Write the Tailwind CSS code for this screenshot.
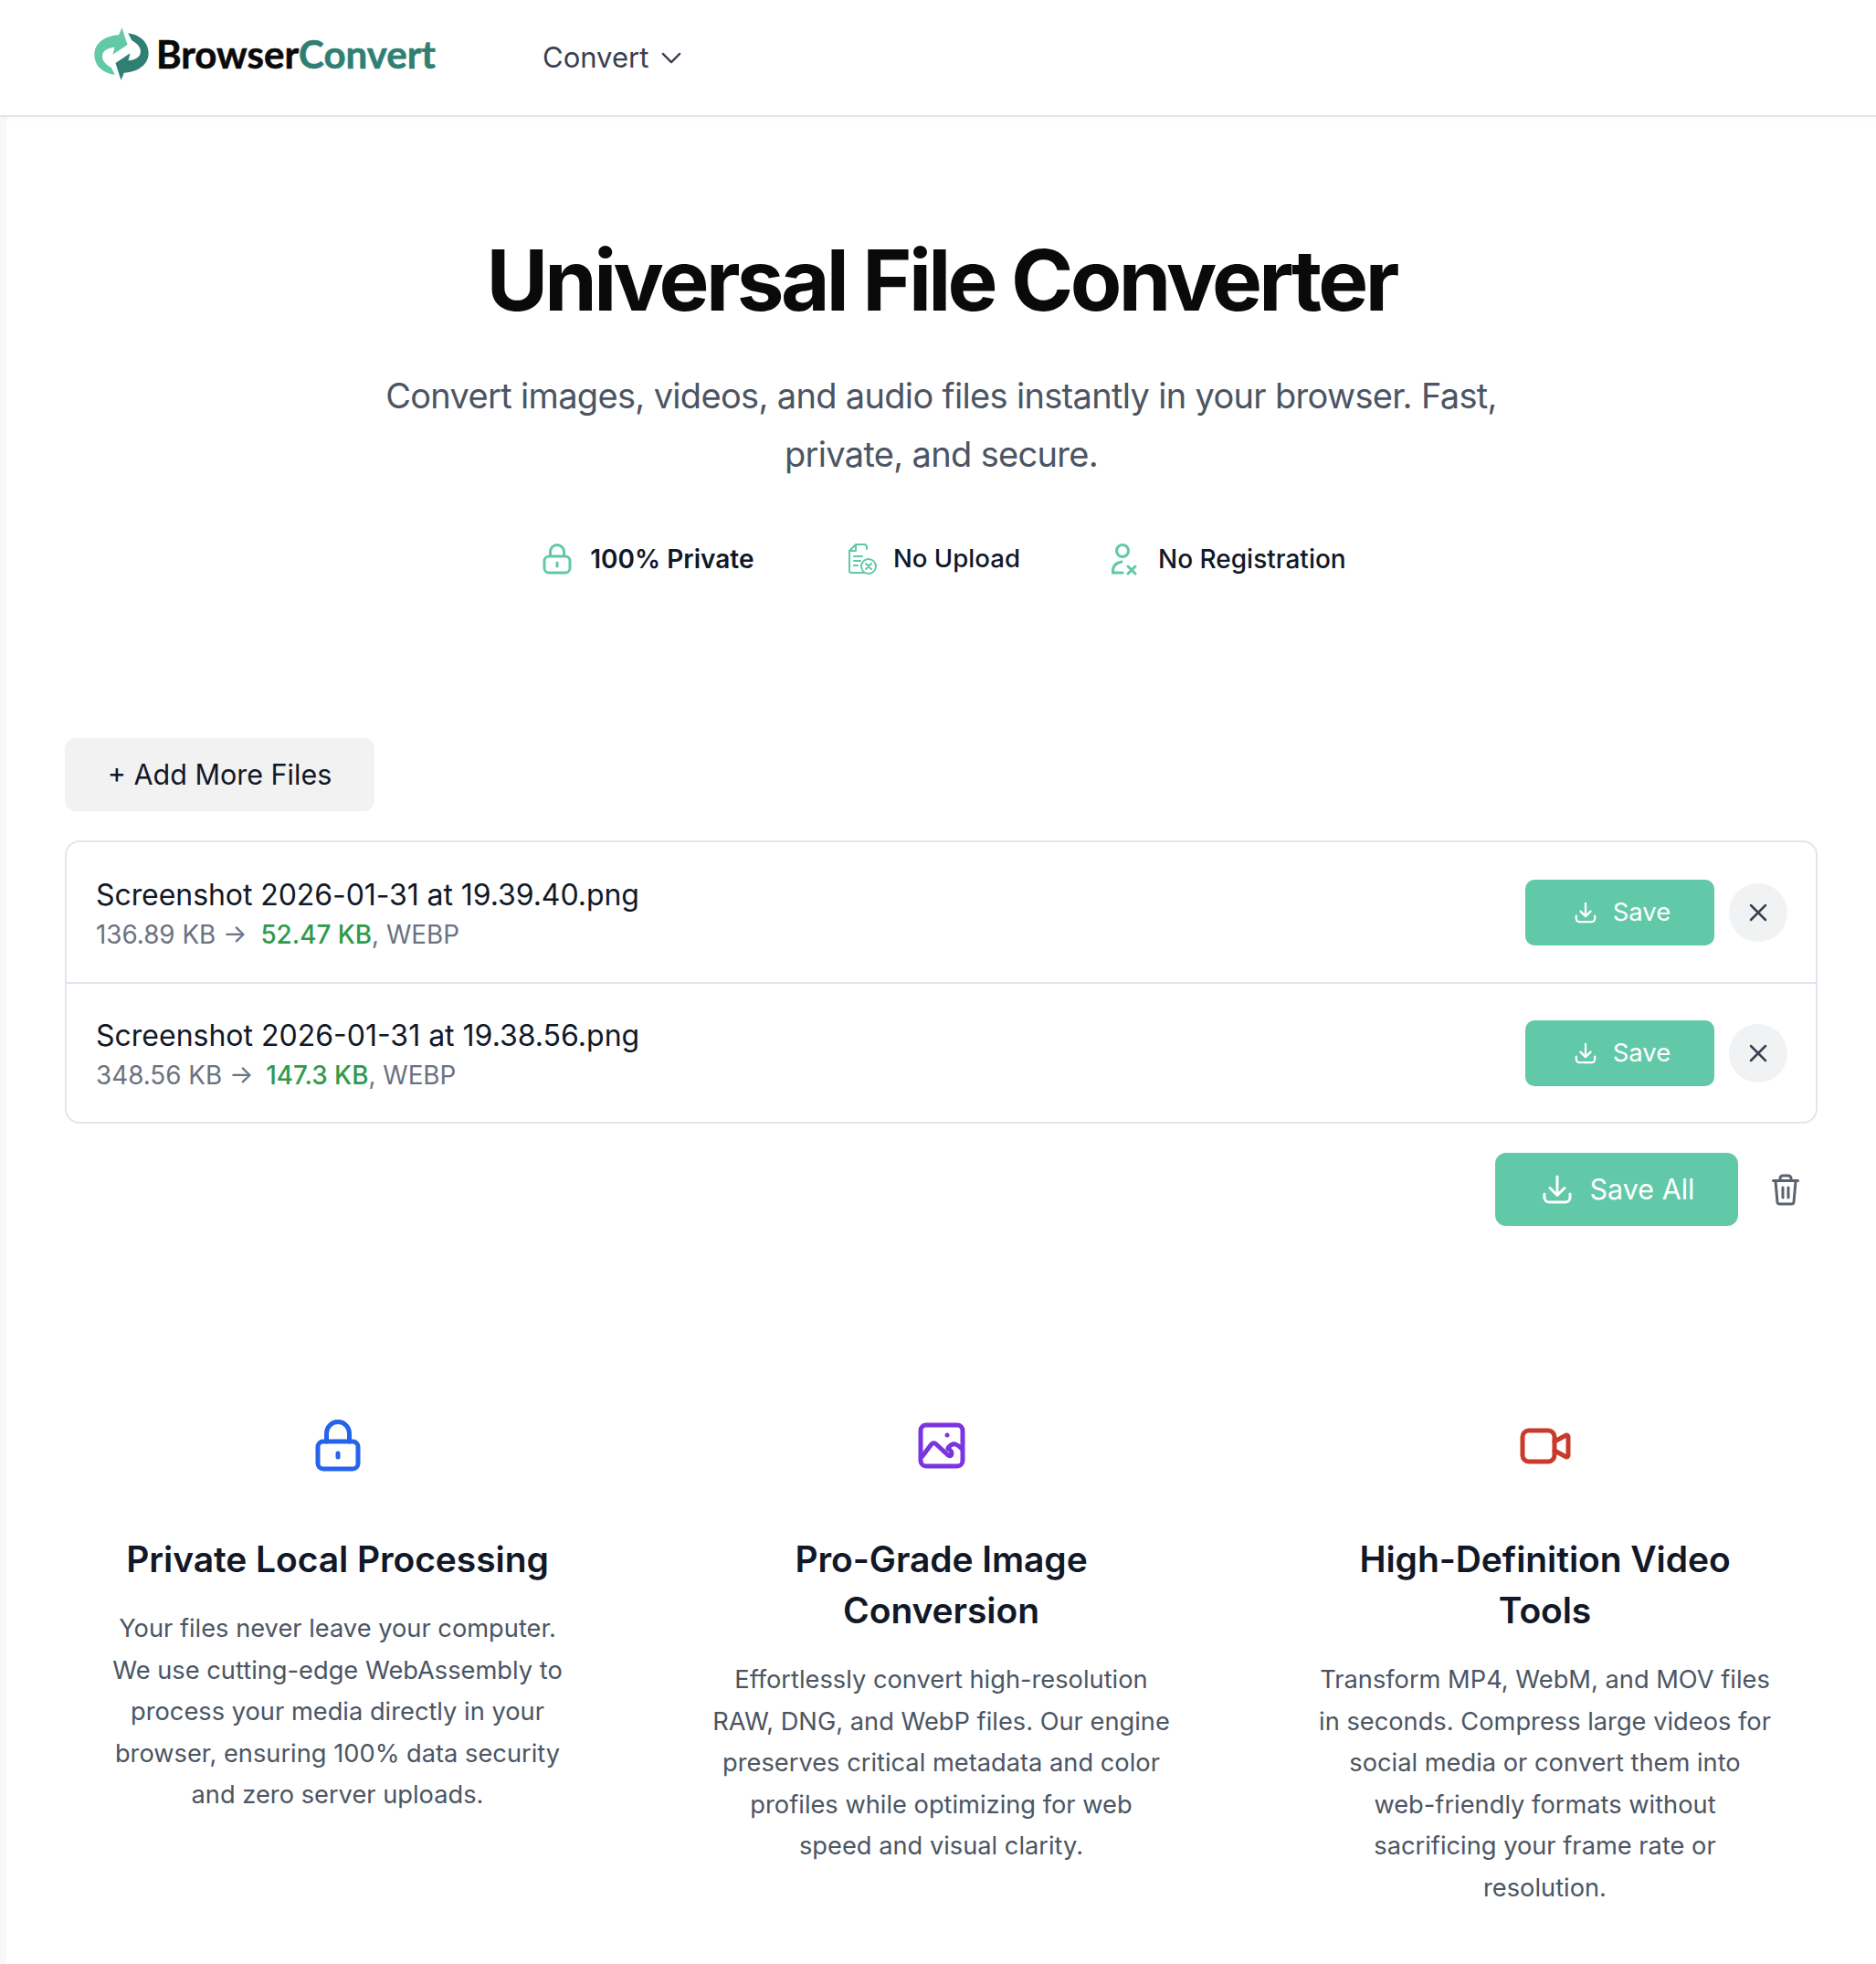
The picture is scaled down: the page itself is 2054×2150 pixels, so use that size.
<!DOCTYPE html>
<html lang="en">
<head>
    <meta charset="UTF-8">
    <title>BrowserConvert - Universal File Converter</title>
    <script src="https://cdn.jsdelivr.net/npm/@tailwindcss/browser@4"></script>
</head>
<body class="bg-white font-['Inter',sans-serif] text-[#111827] min-h-screen overflow-hidden">

    <!-- Header -->
    <header class="relative z-10 h-[128px] border-b-2 border-[#e2e5ee] bg-white shadow-[0_2px_6px_rgba(0,0,0,0.03)] flex items-center">
        <a href="#" class="flex items-center ml-[100px] w-[478px] -mt-[8px]">
            <svg class="w-[67px] h-[64px] shrink-0" viewBox="30 25 200 190">
                <path fill="#61c9a8" d="M130 34 L148 90 L100 122 L106 98 C85 100 66 108 66 128 C66 148 85 158 95 165 L107 188 C70 183 40 160 40 122 C40 85 75 60 120 58 Z"/>
                <path fill="#2f7f73" transform="rotate(180 128.5 120)" d="M130 34 L148 90 L100 122 L106 98 C85 100 66 108 66 128 C66 148 85 158 95 165 L107 188 C70 183 40 160 40 122 C40 85 75 60 120 58 Z"/>
            </svg>
            <span class="font-['Lato',sans-serif] font-bold [-webkit-text-stroke:0.6px] text-[42px] leading-none ml-[4px] text-[#0a0a0a]">Browser<span class="text-[#2f7f73]">Convert</span></span>
        </a>
        <button class="flex items-center gap-[14px] ml-[16px] text-[31px] text-[#374151]">
            Convert
            <svg class="w-[22px] h-[13px]" viewBox="0 0 24 14" fill="none" stroke="#374151" stroke-width="2.5" stroke-linecap="round" stroke-linejoin="round"><path d="M2 2l10 10L22 2"/></svg>
        </button>
    </header>

    <div class="flex min-h-[2022px]">
        <div class="w-[7px] shrink-0 bg-[#f9f9f9]"></div>

        <main class="flex-1 min-w-0 px-[64px]">
            <!-- Hero -->
            <section class="text-center pt-[125px]">
                <h1 class="text-[92.4px] leading-[106px] font-bold tracking-[-0.04em] text-[#0a0a0a]">Universal File Converter</h1>
                <p class="mt-[42px] mx-auto max-w-[1300px] text-[38px] tracking-[-0.67px] leading-[64px] text-[#4b5563]">Convert images, videos, and audio files instantly in your browser. Fast, private, and secure.</p>
                <div class="mt-[62px] pl-[7px] flex justify-center items-center gap-[100px] text-[28px] font-medium text-[#111827]">
                    <div class="flex items-center gap-[20px]">
                        <svg class="w-[32px] h-[36px]" viewBox="0 0 32 36" fill="none" stroke="#61c9a8" stroke-width="3"><rect x="2" y="15" width="28" height="18" rx="5"/><path d="M8.5 15V10a7.5 7.5 0 0115 0v5"/><path d="M16 22v4" stroke-linecap="round"/></svg>
                        <span class="font-semibold">100% Private</span>
                    </div>
                    <div class="flex items-center gap-[17.5px] ml-[3px]">
                        <svg class="w-[32px] h-[36px]" viewBox="0 0 32 36" fill="none" stroke="#61c9a8" stroke-width="2" stroke-linecap="round" stroke-linejoin="round"><path d="M21 7V5a3 3 0 00-3-3H9L2 9v22a2 2 0 002 2h14"/><path d="M9 2v7H2"/><path d="M7 15h9M7 20h7M7 25h4"/><circle cx="23" cy="26" r="8"/><path d="M20 23l6 6M26 23l-6 6"/></svg>
                        <span class="text-[27.6px]">No Upload</span>
                    </div>
                    <div class="flex items-center gap-[21px] -ml-[2px]">
                        <svg class="w-[32px] h-[36px]" viewBox="0 0 32 36" fill="none" stroke="#61c9a8" stroke-width="3" stroke-linecap="round"><circle cx="14" cy="9" r="6.5"/><path d="M14 33H3.5C3 26 7 22 13 21"/><path d="M20 26l8 8M28 26l-8 8"/></svg>
                        <span>No Registration</span>
                    </div>
                </div>
            </section>

            <!-- Files -->
            <section class="mt-[175px]">
                <button class="h-[80px] w-[339px] rounded-[12px] bg-[#f2f2f2] text-[30.5px] text-[#111827]">+ Add More Files</button>

                <div class="mt-[32px] border-2 border-[#e2e5ee] rounded-[16px]">
                    <div class="h-[155px] flex items-center justify-between pl-[32px] pr-[31px] border-b-2 border-[#e2e5ee]">
                        <div class="pt-[4px]">
                            <p class="text-[32px] leading-[44px] tracking-[-0.07px] text-[#111827]">Screenshot 2026-01-31 at 19.39.40.png</p>
                            <p class="text-[27.8px] leading-[42px] text-[#6b7280]">136.89 KB → <span class="ml-[7px] text-[#2f9a4b] font-medium">52.47 KB</span>, WEBP</p>
                        </div>
                        <div class="flex items-center gap-[16px]">
                            <button class="h-[72px] w-[207px] pl-[6px] rounded-[10px] bg-[#61c9a8] text-white text-[27.5px] flex items-center justify-center gap-[18px]">
                                <svg class="w-[24px] h-[24px]" viewBox="0 0 26 26" fill="none" stroke="currentColor" stroke-width="2.5" stroke-linecap="round" stroke-linejoin="round"><path d="M13 2v15M7 11.5l6 6 6-6"/><path d="M2 17v3a4 4 0 004 4h14a4 4 0 004-4v-3"/></svg>
                                Save
                            </button>
                            <button class="w-[64px] h-[64px] rounded-full bg-[#f1f2f4] flex items-center justify-center">
                                <svg class="w-[20px] h-[20px]" viewBox="0 0 20 20" fill="none" stroke="#374151" stroke-width="2.5" stroke-linecap="round"><path d="M2 2l16 16M18 2L2 18"/></svg>
                            </button>
                        </div>
                    </div>
                    <div class="h-[151px] flex items-center justify-between pl-[32px] pr-[31px]">
                        <div class="pt-[4px]">
                            <p class="text-[32px] leading-[44px] text-[#111827]">Screenshot 2026-01-31 at 19.38.56.png</p>
                            <p class="text-[27.8px] leading-[42px] text-[#6b7280]">348.56 KB → <span class="ml-[6px] text-[#2f9a4b] font-medium">147.3 KB</span>, WEBP</p>
                        </div>
                        <div class="flex items-center gap-[16px]">
                            <button class="h-[72px] w-[207px] pl-[6px] rounded-[10px] bg-[#61c9a8] text-white text-[27.5px] flex items-center justify-center gap-[18px]">
                                <svg class="w-[24px] h-[24px]" viewBox="0 0 26 26" fill="none" stroke="currentColor" stroke-width="2.5" stroke-linecap="round" stroke-linejoin="round"><path d="M13 2v15M7 11.5l6 6 6-6"/><path d="M2 17v3a4 4 0 004 4h14a4 4 0 004-4v-3"/></svg>
                                Save
                            </button>
                            <button class="w-[64px] h-[64px] rounded-full bg-[#f1f2f4] flex items-center justify-center">
                                <svg class="w-[20px] h-[20px]" viewBox="0 0 20 20" fill="none" stroke="#374151" stroke-width="2.5" stroke-linecap="round"><path d="M2 2l16 16M18 2L2 18"/></svg>
                            </button>
                        </div>
                    </div>
                </div>

                <div class="mt-[32px] flex items-center justify-end gap-[37px] pr-[20px]">
                    <button class="h-[80px] w-[266px] pl-[4px] rounded-[12px] bg-[#61c9a8] text-white text-[30.5px] flex items-center justify-center gap-[20px]">
                        <svg class="w-[32px] h-[32px]" viewBox="0 0 32 32" fill="none" stroke="currentColor" stroke-width="3" stroke-linecap="round" stroke-linejoin="round"><path d="M16 2v20M8 14.5l8 8 8-8"/><path d="M2 21v4a5 5 0 005 5h18a5 5 0 005-5v-4"/></svg>
                        Save All
                    </button>
                    <svg class="w-[30px] h-[35px]" viewBox="0 0 30 35" fill="none" stroke="#5b6270" stroke-width="3" stroke-linecap="round" stroke-linejoin="round"><path d="M1.5 7.5h27"/><path d="M9 7V5a3 3 0 013-3h6a3 3 0 013 3v2"/><path d="M4 8l2 23a2.5 2.5 0 002.5 2h13a2.5 2.5 0 002.5-2l2-23"/><path d="M12 15v11M18 15v11"/></svg>
                </div>
            </section>

            <!-- Features -->
            <section class="mt-[212px] grid grid-cols-3 gap-[64px] text-center">
                <div class="px-[48px]">
                    <svg class="mx-auto w-[52px] h-[58px]" viewBox="0 0 52 58" fill="none" stroke="#2563eb" stroke-width="5" stroke-linecap="round"><rect x="4" y="24" width="44" height="30" rx="6"/><path d="M13.5 24V15a12.5 12.5 0 0125 0v9"/><path d="M26 37v4"/></svg>
                    <h3 class="mt-[67px] text-[39px] leading-[56px] font-semibold tracking-[-0.002em] text-[#111827]">Private Local Processing</h3>
                    <p class="mt-[25px] text-[27.25px] leading-[45.5px] text-[#4b5563]">Your files never leave your computer. We use cutting-edge WebAssembly to process your media directly in your browser, ensuring 100% data security and zero server uploads.</p>
                </div>
                <div class="px-[48px]">
                    <svg class="mx-auto w-[52px] h-[58px]" viewBox="0 0 52 58" fill="none" stroke="#7c34e0" stroke-width="5" stroke-linecap="round" stroke-linejoin="round"><rect x="3" y="6" width="46" height="45" rx="6"/><circle cx="32" cy="17" r="2.5" fill="#7c34e0" stroke="none"/><path d="M5 40l9-12q3-4 6-1l13 12q4 2 4-2 0-3-4-5"/><path d="M33 31q4-5 8-4 3 1 6 4"/></svg>
                    <h3 class="mt-[67px] text-[39px] leading-[56px] font-semibold tracking-[-0.002em] text-[#111827]">Pro-Grade Image Conversion</h3>
                    <p class="mt-[25px] text-[27.25px] leading-[45.5px] text-[#4b5563]">Effortlessly convert high-resolution RAW, DNG, and WebP files. Our engine preserves critical metadata and color profiles while optimizing for web speed and visual clarity.</p>
                </div>
                <div class="px-[48px]">
                    <svg class="mx-auto w-[56px] h-[58px]" viewBox="0 0 56 58" fill="none" stroke="#c93a2c" stroke-width="5" stroke-linecap="round" stroke-linejoin="round"><rect x="3" y="12" width="35" height="34" rx="7"/><path d="M38 24l13-7a2 2 0 012 2v20a2 2 0 01-2 2l-13-7"/></svg>
                    <h3 class="mt-[67px] text-[39px] leading-[56px] font-semibold tracking-[-0.002em] text-[#111827]">High-Definition Video Tools</h3>
                    <p class="mt-[25px] text-[27.25px] leading-[45.5px] text-[#4b5563]">Transform MP4, WebM, and MOV files in seconds. Compress large videos for social media or convert them into <span class="whitespace-nowrap">web-friendly</span> formats without<br>sacrificing your frame rate or resolution.</p>
                </div>
            </section>
        </main>
    </div>

</body>
</html>
